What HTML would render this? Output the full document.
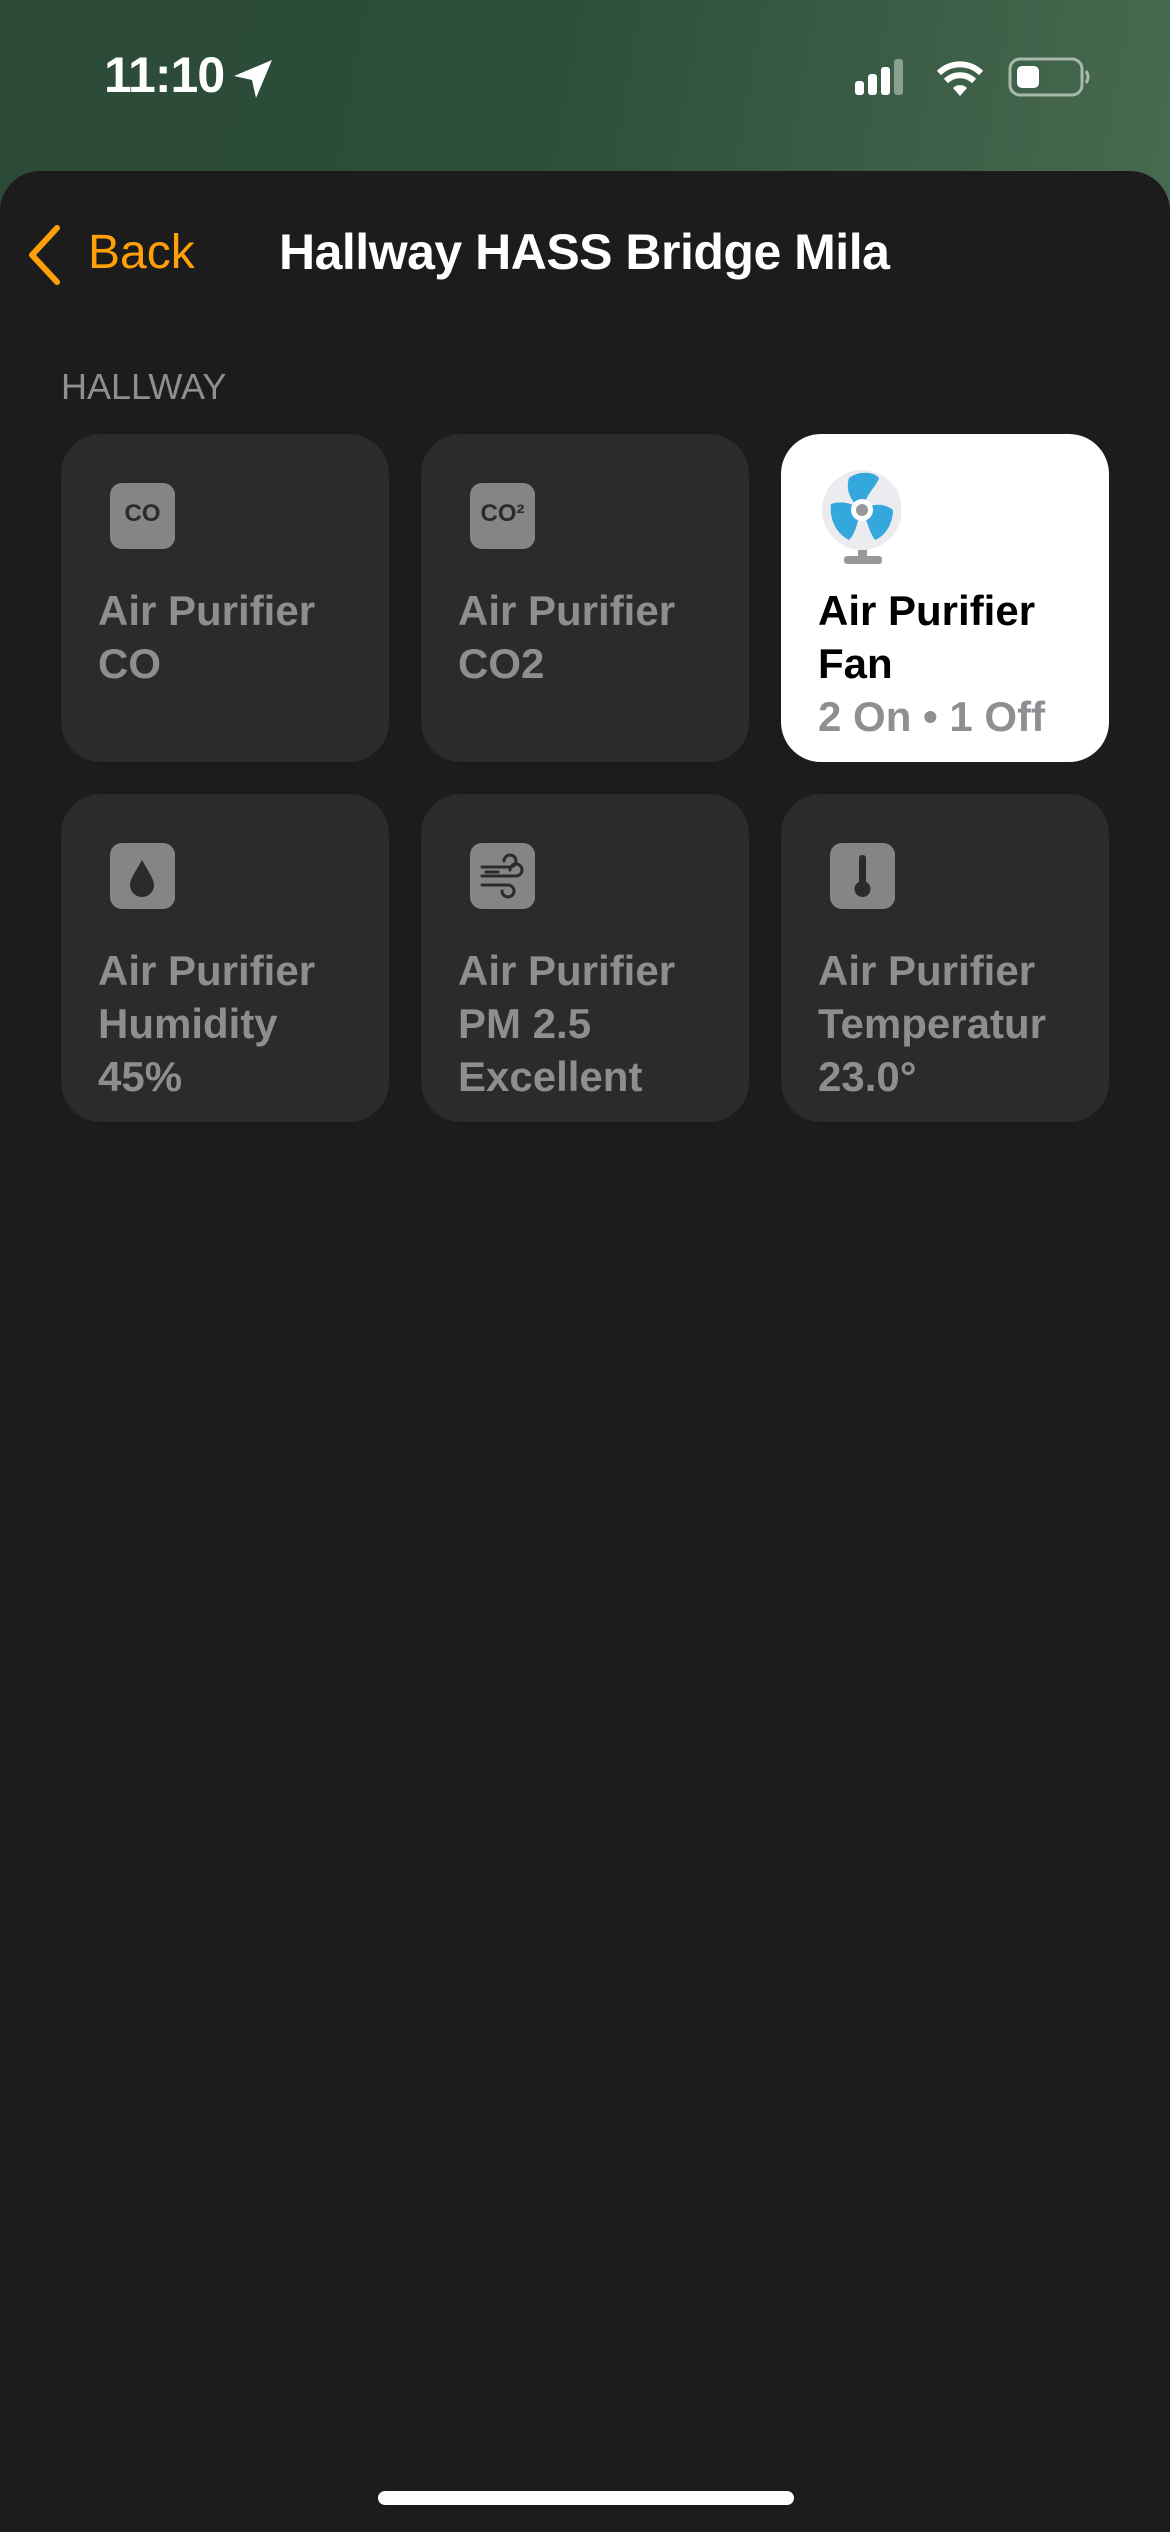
<!DOCTYPE html>
<html><head><meta charset="utf-8"><style>
*{margin:0;padding:0;box-sizing:border-box}
html,body{width:1170px;height:2532px;overflow:hidden}
body{background:linear-gradient(100deg,#2b4a38 0%,#2d4e3b 35%,#486a4f 75%,#4f6e53 100%);font-family:"Liberation Sans",sans-serif;position:relative}
.abs{position:absolute}
.sheet{left:0;top:171px;width:1170px;height:2361px;background:#1c1c1c;border-radius:40px 40px 0 0}
.time{left:104px;top:46px;font-size:50px;font-weight:bold;color:#fff;letter-spacing:-1px}
.tile{position:absolute;width:328px;height:328px;background:#2b2b2b;border-radius:40px}
.ib{position:absolute;left:49px;top:49px;width:65px;height:66px;background:#858585;border-radius:12px}
.tx{position:absolute;left:37px;top:150px;font-size:42px;font-weight:bold;color:#8e8e8e;line-height:53px;white-space:nowrap}
</style></head><body>
<div class="abs time">11:10</div>
<svg class="abs" style="left:232px;top:58px" width="44" height="42" viewBox="0 0 44 42"><path d="M40 2 L2 18 L20 22 L24 40 Z" fill="#fff"/></svg>
<svg class="abs" style="left:853px;top:57px" width="60" height="40"><rect x="2" y="24" width="9" height="14" rx="3" fill="#fff"/><rect x="15" y="17" width="9" height="21" rx="3" fill="#fff"/><rect x="28" y="10" width="9" height="28" rx="3" fill="#fff"/><rect x="41" y="2" width="9" height="36" rx="3" fill="#8aa090"/></svg>
<svg class="abs" style="left:935px;top:58px" width="50" height="40" viewBox="0 0 50 40"><path d="M25 38 L18 30 A10 10 0 0 1 32 30 Z" fill="#fff"/><path d="M11 23 A20 20 0 0 1 39 23" stroke="#fff" stroke-width="6" fill="none"/><path d="M4 15 A30 30 0 0 1 46 15" stroke="#fff" stroke-width="6" fill="none"/></svg>
<svg class="abs" style="left:1008px;top:56px" width="86" height="42"><rect x="2" y="3" width="72" height="36" rx="10" fill="none" stroke="#a8b8aa" stroke-width="3"/><rect x="9" y="10" width="22" height="22" rx="5" fill="#fff"/><path d="M78 15 Q82 21 78 27" stroke="#a8b8aa" stroke-width="3" fill="none"/></svg>
<div class="abs sheet"></div>
<svg class="abs" style="left:24px;top:224px" width="40" height="62"><path d="M33 4 L8 31 L33 58" stroke="#ff9f0a" stroke-width="6" fill="none" stroke-linecap="round" stroke-linejoin="round"/></svg>
<div class="abs" style="left:88px;top:225px;font-size:48px;color:#ff9f0a">Back</div>
<div class="abs" style="left:279px;top:223px;font-size:50px;font-weight:bold;color:#fff;letter-spacing:-0.5px">Hallway HASS Bridge Mila</div>
<div class="abs" style="left:61px;top:366px;font-size:36px;color:#8e8e93">HALLWAY</div>

<div class="tile" style="left:61px;top:434px"><div class="ib"><div style="position:absolute;width:100%;top:17px;text-align:center;font-size:24px;font-weight:bold;color:#2b2b2b">CO</div></div><div class="tx">Air Purifier<br>CO</div></div>
<div class="tile" style="left:421px;top:434px"><div class="ib"><div style="position:absolute;width:100%;top:17px;text-align:center;font-size:24px;font-weight:bold;color:#2b2b2b">CO²</div></div><div class="tx">Air Purifier<br>CO2</div></div>
<div class="tile" style="left:781px;top:434px;background:#fff">
<svg style="position:absolute;left:40px;top:30px" width="80" height="100" viewBox="0 0 80 100"><circle cx="41" cy="46" r="40" fill="#ececf0"/><path d="M41 46 C30 38 24 26 28 14 C38 6 54 8 58 14 C56 22 46 28 41 46Z" fill="#34a8dc"/><path d="M41 46 C50 40 62 38 72 46 C72 60 64 72 54 76 C48 68 46 56 41 46Z" fill="#34a8dc"/><path d="M41 46 C36 56 36 68 28 76 C16 70 8 56 10 40 C22 36 32 40 41 46Z" fill="#34a8dc"/><circle cx="41" cy="46" r="11" fill="#fff"/><circle cx="41" cy="46" r="6" fill="#999"/><rect x="37" y="86" width="9" height="8" fill="#999"/><rect x="23" y="92" width="38" height="8" rx="3" fill="#999"/></svg>
<div class="tx" style="color:#000">Air Purifier<br>Fan<br><span style="color:#8e8e93">2 On • 1 Off</span></div></div>

<div class="tile" style="left:61px;top:794px"><div class="ib"><svg width="65" height="66"><path d="M32 17 C26 28 20 36 20 42 A12 12 0 0 0 44 42 C44 36 38 28 32 17Z" fill="#2b2b2b"/></svg></div><div class="tx">Air Purifier<br>Humidity<br>45%</div></div>
<div class="tile" style="left:421px;top:794px"><div class="ib"><svg width="65" height="66" fill="none" stroke="#2b2b2b" stroke-width="3" stroke-linecap="round"><path d="M12 24 H40 A6 6 0 1 0 34 18"/><path d="M12 33 H46 A6 6 0 1 0 40 27"/><path d="M12 42 H38 A6 6 0 1 1 32 48"/><path d="M16 29 H28"/></svg></div><div class="tx">Air Purifier<br>PM 2.5<br>Excellent</div></div>
<div class="tile" style="left:781px;top:794px"><div class="ib"><svg width="65" height="66"><rect x="29" y="12" width="7" height="30" rx="3" fill="#2b2b2b"/><circle cx="32.5" cy="46" r="8" fill="#2b2b2b"/></svg></div><div class="tx">Air Purifier<br>Temperatur<br>23.0°</div></div>

<div class="abs" style="left:378px;top:2491px;width:416px;height:14px;background:#fff;border-radius:7px"></div>
</body></html>
